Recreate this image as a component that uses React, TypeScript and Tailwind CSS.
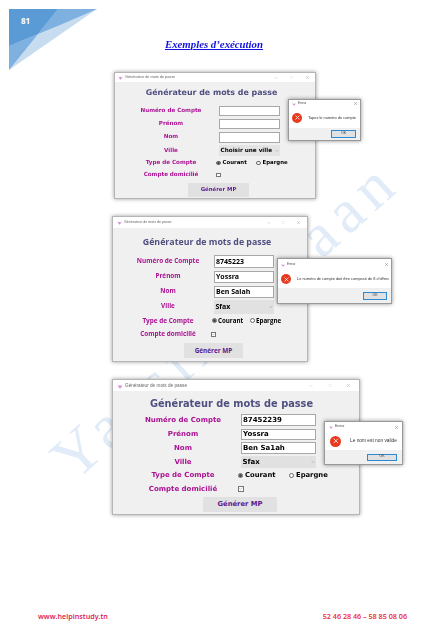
import { Check, Minus, Square, X, ChevronDown } from 'lucide-react';

type Config = {
  box: string;
  font: string;
  bar: string;
  barText: string;
  iconSize: string;
  minus: string;
  square: string;
  heading: string;
  rows: string[];
  labelCol: string;
  label: string;
  control: string;
  input: string;
  inputs: string[];
  value: string;
  select: string;
  selectText: string;
  radio: string;
  radioDot: string;
  courant: string;
  choice: string;
  check: string;
  button: string;
  buttonText: string;
  values: string[];
  city: string;
  checked: boolean;
  dialog: string;
  dialogBar: string;
  dialogBody: string;
  errorIcon: string;
  message: string;
  messageText: string;
  dialogFooter: string;
  ok: string;
};

const fieldLabels = ['Numéro de Compte', 'Prénom', 'Nom', 'Ville', 'Type de Compte', 'Compte domicilié'];

const windows: Config[] = [
  {
    box: 'ml-[114px] mt-[21px] w-[202px] h-[127px]',
    font: "font-['DejaVu_Sans']",
    bar: 'h-[9px] pr-[5px]',
    barText: 'text-[3.8px]',
    iconSize: 'w-[5px] h-[5px] ml-[3px]',
    minus: 'mr-[12px]',
    square: 'mr-[12px]',
    heading: 'h-[22.5px] pt-[7px] pr-[7px] text-[7.9px] text-center',
    rows: ['h-[13px]', 'h-[13px]', 'h-[13.5px]', 'h-[13px]', 'h-[12px]', 'h-[12px]'],
    labelCol: 'w-[80px] ml-[16px] mr-[5px]',
    label: 'text-[5.6px]',
    control: 'ml-[3px]',
    input: 'w-[61px]',
    inputs: ['h-[10.5px]', 'h-[10.5px]', 'h-[10.5px]'],
    value: 'text-[6px]',
    select: 'w-[61px] h-[11px] bg-[#e4e4e4]',
    selectText: 'text-[5.7px]',
    radio: 'w-[4.5px] h-[4.5px] mr-[2px]',
    radioDot: 'w-[2.5px] h-[2.5px]',
    courant: 'w-[40px]',
    choice: 'text-[5.4px]',
    check: 'w-[4.5px] h-[4.5px]',
    button: 'ml-[73px] mt-[1.5px] w-[61px] h-[14px]',
    buttonText: 'text-[5.4px]',
    values: ['', '', ''],
    city: 'Choisir une ville',
    checked: false,
    dialog: 'left-[173px] top-[26px] w-[73px] h-[42px]',
    dialogBar: 'h-[7px] pl-[3px] pr-[2px] text-[3px]',
    dialogBody: 'h-[21px] pl-[3px]',
    errorIcon: 'w-[10px] h-[10px]',
    message: 'ml-[6px]',
    messageText: 'text-[3.9px]',
    dialogFooter: 'h-[14px] pr-[4px]',
    ok: 'w-[25px] h-[8px] text-[3.5px]',
  },
  {
    box: 'ml-[112px] mt-[17px] w-[196px] h-[146px]',
    font: "font-['Open_Sans']",
    bar: 'h-[11px] pr-[6px]',
    barText: 'text-[3.6px]',
    iconSize: 'w-[5px] h-[5px] ml-[4px]',
    minus: 'mr-[11px]',
    square: 'mr-[11px]',
    heading: 'h-[25px] pt-[10px] pr-[6px] text-[8.8px] text-center',
    rows: ['h-[16px]', 'h-[15px]', 'h-[15px]', 'h-[15px]', 'h-[13.5px]', 'h-[13.5px]'],
    labelCol: 'w-[80px] ml-[15px] mr-[3px]',
    label: 'text-[6.4px]',
    control: 'ml-[3px]',
    input: 'w-[60px]',
    inputs: ['h-[13px]', 'h-[12px]', 'h-[12px]'],
    value: 'text-[7px]',
    select: 'w-[60px] h-[14px] bg-[#e1e1e1]',
    selectText: 'text-[7px]',
    radio: 'w-[4.5px] h-[4.5px] mr-[1.5px]',
    radioDot: 'w-[2.5px] h-[2.5px]',
    courant: 'w-[38px] ml-[1px]',
    choice: 'text-[6.2px]',
    check: 'w-[5px] h-[5px]',
    button: 'ml-[71px] mt-[2px] w-[59px] h-[15px]',
    buttonText: 'text-[6.4px]',
    values: ['8745223', 'Yossra', 'Ben Salah'],
    city: 'Sfax',
    checked: true,
    dialog: 'left-[164px] top-[41px] w-[115px] h-[46px]',
    dialogBar: 'h-[11px] pl-[3px] pr-[2px] text-[3px]',
    dialogBody: 'h-[18px] pl-[3px]',
    errorIcon: 'w-[10px] h-[10px]',
    message: 'ml-[6px]',
    messageText: 'text-[3.9px]',
    dialogFooter: 'h-[15px] pr-[4px]',
    ok: 'w-[24px] h-[8px] text-[3.5px]',
  },
  {
    box: 'ml-[112px] mt-[17px] w-[248px] h-[136px]',
    font: "font-['DejaVu_Sans']",
    bar: 'h-[11px] pr-[8px]',
    barText: 'text-[4.7px]',
    iconSize: 'w-[6px] h-[6px] ml-[4px]',
    minus: 'mr-[16px]',
    square: 'mr-[14px]',
    heading: 'h-[22px] pt-[8px] pr-[9px] text-[9.8px] text-center',
    rows: ['h-[14px]', 'h-[14px]', 'h-[14px]', 'h-[14px]', 'h-[13.5px]', 'h-[13px]'],
    labelCol: 'w-[90px] ml-[25px] mr-[9px]',
    label: 'text-[7px]',
    control: 'ml-[4px]',
    input: 'w-[75px]',
    inputs: ['h-[12px]', 'h-[11px]', 'h-[11.5px]'],
    value: 'text-[7px]',
    select: 'w-[75px] h-[12px] bg-[#e1e1e1]',
    selectText: 'text-[7px]',
    radio: 'w-[5px] h-[5px] mr-[2px]',
    radioDot: 'w-[3px] h-[3px]',
    courant: 'w-[51px] ml-[1px]',
    choice: 'text-[6.8px]',
    check: 'w-[5.5px] h-[5.5px] ml-[1px]',
    button: 'ml-[90px] mt-[1.5px] w-[74px] h-[15px]',
    buttonText: 'text-[6.8px]',
    values: ['87452239', 'Yossra', 'Ben Sa1ah'],
    city: 'Sfax',
    checked: true,
    dialog: 'left-[211px] top-[41px] w-[79px] h-[44px]',
    dialogBar: 'h-[10px] pl-[4px] pr-[3px] text-[3.4px]',
    dialogBody: 'h-[18px] pl-[5px]',
    errorIcon: 'w-[11px] h-[11px]',
    message: 'ml-[9px]',
    messageText: 'text-[4.8px]',
    dialogFooter: 'h-[15px] pr-[5px]',
    ok: 'w-[30px] h-[7px] text-[3.5px]',
  },
];

const messages = [
  'Tapez le numéro de compte',
  'Le numéro de compte doit être composé de 8 chiffres',
  'Le nom est non valide',
];

function AppLogo({ className }: { className: string }) {
  return (
    <svg viewBox="0 0 10 10" className={className}>
      <path d="M1 1.5 L3 5 L5 3.5 L7 5 L9 1.5 L8 6 L5 9.5 L2 6 Z" fill="#d88fd8" />
    </svg>
  );
}

function GeneratorWindow({ c, message }: { c: Config; message: string }) {
  return (
    <div className={`relative flex flex-col border border-[#b5b5b5] bg-[#f0f0f0] shadow-[0_0_4px_rgba(0,0,0,0.4)] ${c.box}`}>
      <div className={`flex items-center bg-white text-[#666] ${c.bar}`}>
        <AppLogo className={c.iconSize} />
        <span className={`ml-[2px] flex-1 ${c.barText}`}>Générateur de mots de passe</span>
        <Minus className={`h-[4px] w-[4px] text-[#888] ${c.minus}`} strokeWidth={1.5} />
        <Square className={`h-[3.5px] w-[3.5px] text-[#ccc] ${c.square}`} strokeWidth={1.5} />
        <X className="h-[5px] w-[5px] text-[#888]" strokeWidth={1.5} />
      </div>

      <div className={`font-bold leading-none text-[#4f4f80] ${c.font} ${c.heading}`}>Générateur de mots de passe</div>

      {fieldLabels.map((label, i) => (
        <div key={label} className={`flex items-center font-bold leading-none ${c.font} ${c.rows[i]}`}>
          <div className={`shrink-0 text-center text-[#ab1192] ${c.labelCol} ${c.label}`}>{label}</div>
          {i < 3 && (
            <div className={`flex items-center border border-[#a8a8a8] bg-white pl-[1px] text-black ${c.control} ${c.input} ${c.inputs[i]} ${c.value}`}>
              {c.values[i]}
            </div>
          )}
          {i === 3 && (
            <div className={`flex items-center justify-between whitespace-nowrap px-[1.5px] text-black ${c.control} ${c.select} ${c.selectText}`}>
              <span>{c.city}</span>
              <ChevronDown className="h-[4px] w-[4px] shrink-0 text-[#666]" />
            </div>
          )}
          {i === 4 && (
            <div className={`flex items-center text-black ${c.choice}`}>
              <div className={`flex items-center ${c.courant}`}>
                <span className={`flex items-center justify-center rounded-full border-[0.5px] border-[#666] ${c.radio}`}>
                  <span className={`rounded-full bg-[#444] ${c.radioDot}`} />
                </span>
                Courant
              </div>
              <div className="flex items-center">
                <span className={`rounded-full border-[0.5px] border-[#666] bg-white ${c.radio}`} />
                Epargne
              </div>
            </div>
          )}
          {i === 5 && (
            <span className={`flex items-center justify-center border-[0.5px] border-[#777] bg-white ${c.check}`}>
              {c.checked && <Check className="h-full w-full text-[#777]" strokeWidth={3} />}
            </span>
          )}
        </div>
      ))}

      <div className={`flex items-center justify-center bg-[#e1e1e1] font-bold text-[#5d1a8f] ${c.font} ${c.button} ${c.buttonText}`}>
        Générer MP
      </div>

      <div className={`absolute flex flex-col border border-[#999] bg-white shadow-[0_0_4px_rgba(0,0,0,0.45)] ${c.dialog}`}>
        <div className={`flex items-center justify-between text-[#444] ${c.dialogBar}`}>
          <div className="flex items-center gap-[2px]">
            <AppLogo className="h-[4px] w-[4px]" />
            Erreur
          </div>
          <X className="h-[5px] w-[5px] text-[#444]" strokeWidth={1.5} />
        </div>
        <div className={`flex items-center ${c.dialogBody}`}>
          <span className={`flex shrink-0 items-center justify-center rounded-full bg-[#e8391f] ${c.errorIcon}`}>
            <X className="h-[70%] w-[70%] text-white" strokeWidth={2.5} />
          </span>
          <span className={`whitespace-nowrap text-[#333] ${c.message} ${c.messageText}`}>{message}</span>
        </div>
        <div className={`flex flex-1 items-center justify-end bg-[#f0f0f0] ${c.dialogFooter}`}>
          <div className={`flex items-center justify-center border border-[#2a8ad4] bg-[#e1e1e1] text-[#333] ${c.ok}`}>OK</div>
        </div>
      </div>
    </div>
  );
}

export default function App() {
  return (
    <div className="relative flex h-[630px] w-[446px] flex-col overflow-hidden bg-white font-['Liberation_Sans',sans-serif]">
      {/* watermark, sits behind the screenshots */}
      <div className="absolute left-[-25px] top-[289px] w-[500px] -rotate-[42deg] whitespace-nowrap text-center font-['Liberation_Serif'] text-[62px] leading-[60px] tracking-[8px] text-[#e1ecf8]">
        Yassine Maan
      </div>

      <svg viewBox="0 0 100 75" className="absolute left-0 top-0 h-[75px] w-[100px]">
        <polygon points="9,9 97,9 9,70" fill="#c8dcf0" />
        <polygon points="9,46 38,34 9,70" fill="#7fb1e0" />
        <polygon points="58,9 97,9 60,25 38,34" fill="#7fb1e0" />
        <polygon points="9,9 58,9 38,34 9,46" fill="#5b9bd5" />
      </svg>
      <span className="absolute left-[21px] top-[15px] font-['Open_Sans'] text-[8px] font-bold leading-[12px] text-white">81</span>

      <div className="relative flex flex-col blur-[0.35px]">
        <h1 className="relative mt-[37px] h-[14px] pr-[18px] text-center font-['Liberation_Serif'] text-[10.8px] font-bold italic leading-[14px] text-[#1212e0] underline">
          Exemples d’exécution
        </h1>
        {windows.map((c, i) => (
          <GeneratorWindow key={i} c={c} message={messages[i]} />
        ))}
      </div>

      <div className="relative mt-auto mb-[8px] flex justify-between pl-[38px] pr-[39px] font-['Open_Sans'] text-[7.2px] font-semibold leading-[12px]">
        <span className="text-[#e0114f]">www.helpinstudy.tn</span>
        <span className="text-[#f01c2e]">52 46 28 46 – 58 85 08 06</span>
      </div>
    </div>
  );
}
